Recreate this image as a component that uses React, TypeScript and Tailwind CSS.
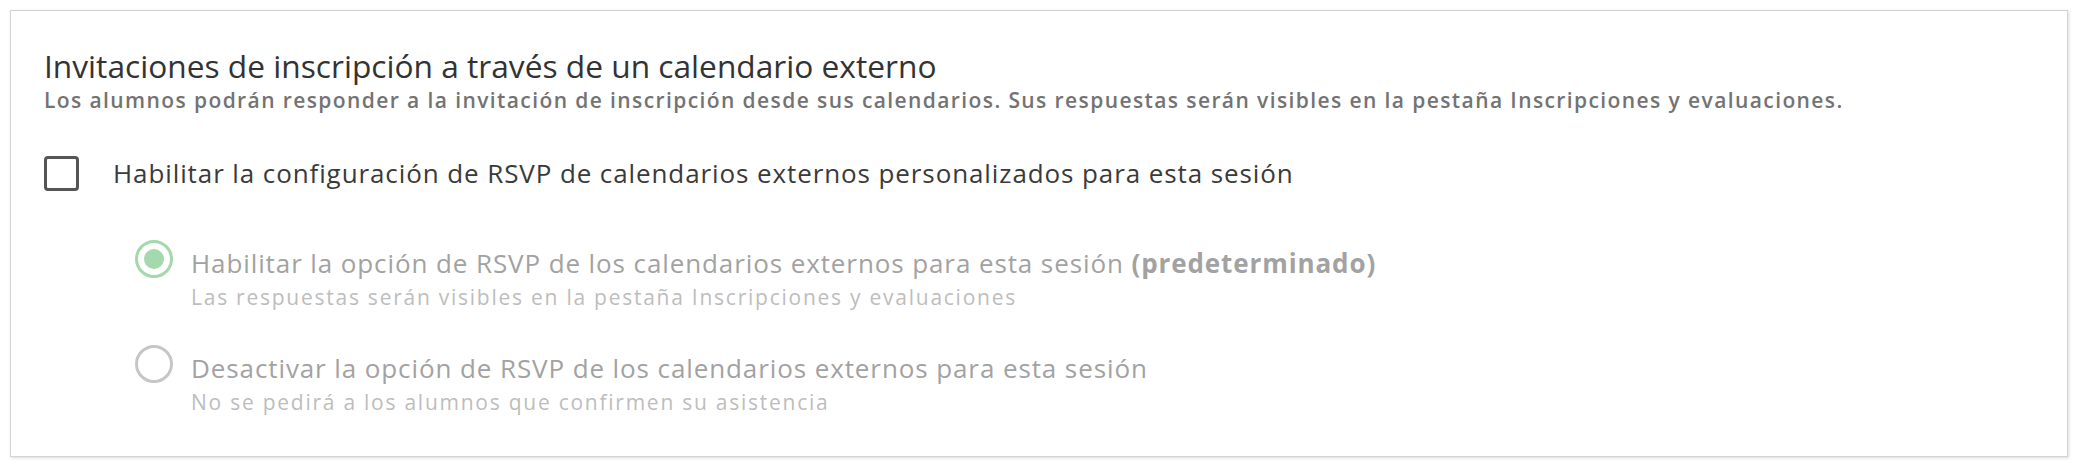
import React from "react";

const Radio = ({ checked }: { checked?: boolean }) =>
  checked ? (
    <span className="flex h-[38px] w-[38px] shrink-0 items-center justify-center rounded-full border-[3px] border-[#a3d9ac]">
      <span className="h-[20px] w-[20px] rounded-full bg-[#a3d9ac]" />
    </span>
  ) : (
    <span className="h-[38px] w-[38px] shrink-0 rounded-full border-[3px] border-[#c6c6c6]" />
  );

const Option = ({ checked, label, bold, hint }: { checked?: boolean; label: string; bold?: string; hint: string }) => (
  <div className="flex items-start gap-[18px]">
    <Radio checked={checked} />
    <div className="pt-[6px]">
      <p className="text-[26px] leading-[34px] tracking-[0.9px] text-[#a2a2a2]">
        {label}
        {bold && <span className="font-bold"> {bold}</span>}
      </p>
      <p className="mt-[3px] text-[21px] leading-[28px] tracking-[1.75px] text-[#bdbdbd]">{hint}</p>
    </div>
  </div>
);

export default function App() {
  return (
    <div className="bg-white p-[10px]" style={{ fontFamily: '"Open Sans", sans-serif' }}>
      <div className="h-[447px] border border-[#d3d3d3] bg-white pl-[33px] pt-[36px] shadow-[1px_1px_3px_rgba(0,0,0,0.15)]">
        <h2 className="text-[31.7px] leading-[38px] text-[#333333]">
          Invitaciones de inscripción a través de un calendario externo
        </h2>
        <p className="mt-[1px] text-[21px] font-semibold leading-[28px] tracking-[1.4px] text-[#737373]">
          Los alumnos podrán responder a la invitación de inscripción desde sus calendarios. Sus respuestas serán visibles en la pestaña Inscripciones y evaluaciones.
        </p>
        <label className="mt-[41px] flex items-center gap-[34px]">
          <span className="h-[35px] w-[35px] shrink-0 rounded-[4px] border-[3px] border-[#555555]" />
          <span className="text-[26px] leading-[36px] tracking-[0.9px] text-[#3a3a3a]">
            Habilitar la configuración de RSVP de calendarios externos personalizados para esta sesión
          </span>
        </label>
        <div className="mt-[49px] flex flex-col gap-[34px] pl-[91px]">
          <Option
            checked
            label="Habilitar la opción de RSVP de los calendarios externos para esta sesión"
            bold="(predeterminado)"
            hint="Las respuestas serán visibles en la pestaña Inscripciones y evaluaciones"
          />
          <Option
            label="Desactivar la opción de RSVP de los calendarios externos para esta sesión"
            hint="No se pedirá a los alumnos que confirmen su asistencia"
          />
        </div>
      </div>
    </div>
  );
}
